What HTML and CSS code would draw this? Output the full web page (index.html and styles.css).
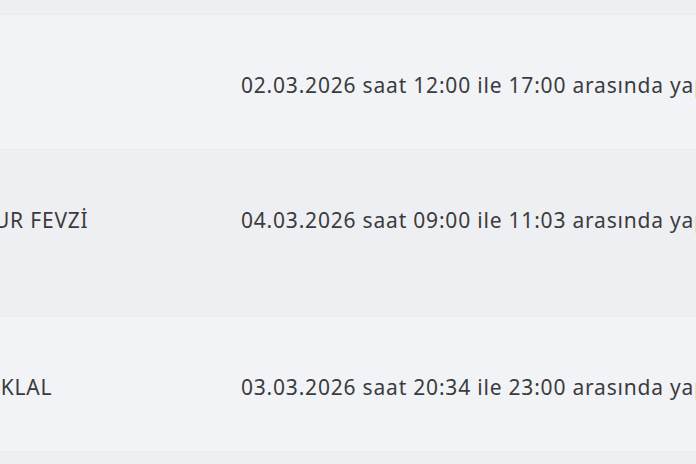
FILE: index.html
```html
<!DOCTYPE html>
<html lang="tr">
<head>
<meta charset="utf-8">
<link rel="stylesheet" href="styles.css">
</head>
<body>
<div class="table">
  <div class="row row-dark row-top"></div>
  <div class="row row-light">
    <div class="cell name"><span class="cut-link">A</span></div>
    <div class="cell info">02.03.2026 saat 12:00 ile 17:00 arasında yapılacak planlı kesinti</div>
  </div>
  <div class="row row-dark row-tall">
    <div class="cell name">ONUR FEVZİ</div>
    <div class="cell info">04.03.2026 saat 09:00 ile 11:03 arasında yapılacak planlı kesinti</div>
  </div>
  <div class="row row-light">
    <div class="cell name">İSTİKLAL</div>
    <div class="cell info">03.03.2026 saat 20:34 ile 23:00 arasında yapılacak planlı kesinti</div>
  </div>
  <div class="row row-dark row-bottom"></div>
</div>
</body>
</html>
```
FILE: styles.css
```css
html, body {
  margin: 0;
  padding: 0;
  width: 696px;
  height: 464px;
  overflow: hidden;
  background: #eceef2;
}
.table {
  display: flex;
  flex-direction: column;
  font-family: "Noto Sans", "DejaVu Sans", sans-serif;
  font-size: 21px;
  letter-spacing: 0.8px;
  color: #3b3b3d;
}
.row {
  display: grid;
  grid-template-columns: 241px 1fr;
  white-space: nowrap;
  border-bottom: 1px solid #ebedf0;
}
.row-dark { background: #edeff2; }
.row-light { background: #f1f3f6; height: 134px; }
.row-tall { height: 166px; }
.row-top { height: 14px; }
.row-bottom { height: 20px; }
.cell {
  padding-top: 58px;
  line-height: 25px;
}
.name {
  margin-left: -40px;
}
.info {
  padding-left: 0;
}
.cut-link {
  display: inline-block;
  margin-left: 27px;
  color: #d3edf3;
}
```
